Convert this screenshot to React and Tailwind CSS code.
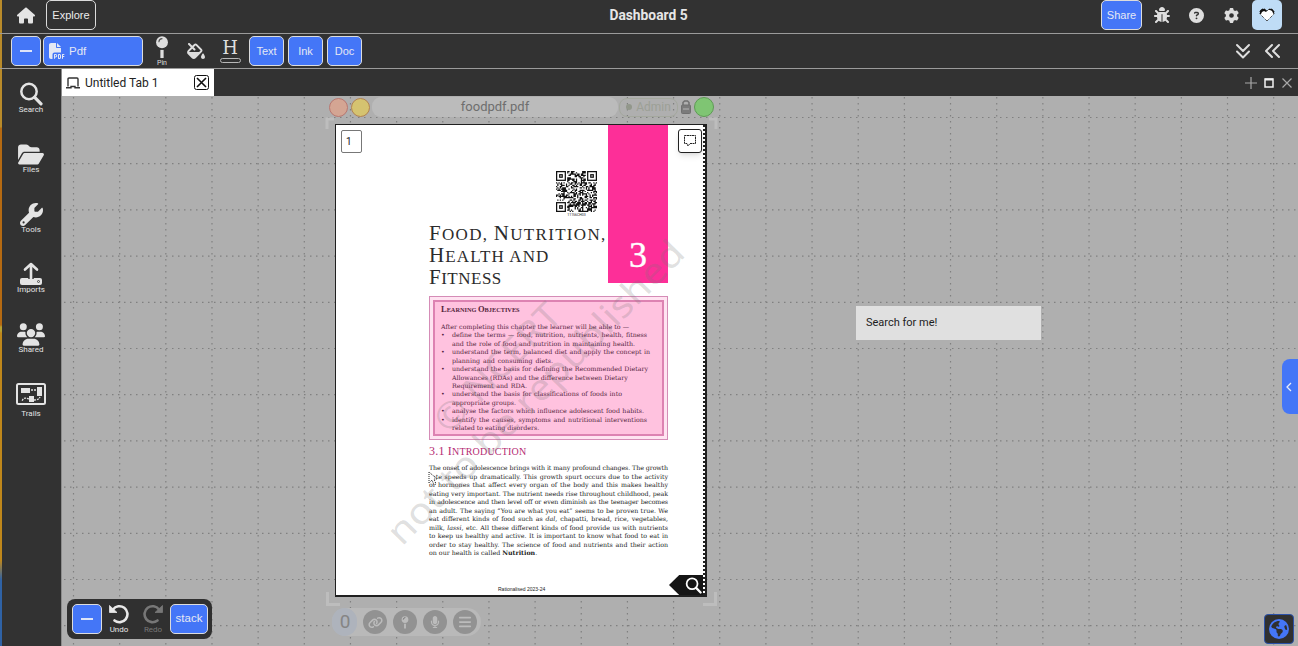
import React from "react";
import {
  FaHouse, FaBug, FaCircleQuestion, FaGear, FaFillDrip, FaFolderOpen,
  FaWrench, FaUsers, FaLink, FaMicrophone, FaBars,
  FaFilePdf, FaEarthAmericas,
} from "react-icons/fa6";

const blueBtn =
  "flex h-[30px] items-center justify-center rounded-[5px] border border-[#dcdcdc] bg-[#4476f7] font-['Liberation_Sans',sans-serif] text-[12px] text-[#e4e8f4]";

function MagnifierIcon({ className }) {
  return (
    <svg viewBox="0 0 24 24" className={className} fill="none" stroke="currentColor">
      <circle cx="10" cy="9.5" r="7.7" strokeWidth="2.5" />
      <path d="M15.7 15.4 22 21.8" strokeWidth="3.2" strokeLinecap="round" />
    </svg>
  );
}

function ImportIcon() {
  return (
    <svg viewBox="0 0 24 24" className="size-6" fill="none" stroke="currentColor">
      <rect x="1" y="16" width="22" height="7" rx="2" fill="currentColor" stroke="none" />
      <path d="M12 17V3" strokeWidth="5.5" stroke="#323232" />
      <path d="M12 18V3M6 7.5 12 2l6 5.500" strokeWidth="2.6" strokeLinecap="round" strokeLinejoin="round" />
      <circle cx="19.500" cy="19.500" r="1" stroke="#323232" strokeWidth=".8" />
    </svg>
  );
}

function TrailsIcon() {
  return (
    <svg viewBox="0 0 30 22" className="h-[22px] w-[30px]" fill="none" stroke="currentColor">
      <rect x="1" y="1" width="28" height="20" rx="1.500" strokeWidth="2" />
      <path d="M5 5h9v5H5zM21 4h5v9h-5zM13 13h5v6h-5z" fill="currentColor" stroke="none" />
      <path d="M15 7h5M13 16c-5-2-6 0-7 2M18 17c4 0 5-1 6-3" strokeWidth="1.300" strokeDasharray="2 1" />
    </svg>
  );
}

function PinGlyph({ className }) {
  return (
    <svg viewBox="0 0 14 24" className={className}>
      <circle cx="7" cy="6.500" r="6.200" fill="currentColor" />
      <path d="M3.800 6A3.500 3.500 0 0 1 7 2.800" stroke="#555" fill="none" strokeWidth="1.200" strokeLinecap="round" />
      <path d="M5.300 14.500h3.400V23H5.300z" fill="currentColor" />
    </svg>
  );
}

function TurnArrow({ className }) {
  return (
    <svg viewBox="0 0 20 20" className={className} fill="none" stroke="currentColor">
      <path d="M4 5.500A8 8 0 1 1 5.500 16.500" strokeWidth="2.600" strokeLinecap="round" />
      <path d="M.5 1.500V8.500H8z" fill="currentColor" strokeWidth=".8" strokeLinejoin="round" />
    </svg>
  );
}

const sideItems = [
  ["Search", <MagnifierIcon className="size-6" />],
  ["Files", <FaFolderOpen className="h-[23px] w-[26px]" />],
  ["Tools", <FaWrench className="size-[23px]" />],
  ["Imports", <ImportIcon />],
  ["Shared", <FaUsers className="h-[25px] w-[28px]" />],
  ["Trails", <TrailsIcon />],
];

function TopBar() {
  return (
    <header className="flex h-[34px] shrink-0 items-start border-b border-[#9b9b9b] pr-4 pl-[17px]">
      <div className="flex h-[30px] flex-1 items-center">
        <FaHouse className="h-[17px] w-[18px] text-[#e4e4e4]" />
        <div className="ml-[11px] flex h-[30px] w-[50px] items-center justify-center rounded-[5px] border border-[#dcdcdc] font-['Liberation_Sans',sans-serif] text-[11px] text-[#ececec]">
          Explore
        </div>
      </div>
      <h1 className="mr-[2px] flex h-[30px] items-center text-[13.800px] font-bold text-[#e6e6e6]">Dashboard 5</h1>
      <div className="flex h-[30px] flex-1 items-center justify-end text-[#dedede]">
        <div className={`${blueBtn} w-[41px]`}>
          <span className="pt-px text-[11px]">Share</span>
        </div>
        <FaBug className="ml-3 size-4" />
        <FaCircleQuestion className="ml-[19px] size-[15px]" />
        <FaGear className="ml-5 size-[15px]" />
        <div className="ml-[13px] flex h-[30px] w-[30px] items-center justify-center rounded-[5px] bg-[#bfdcf6]">
          <svg viewBox="0 0 16 14" className="h-[14px] w-4">
            <path d="M8 13 1 6V3l2-2h3l2 2 2-2h3l2 2v3z" fill="#fff" stroke="#1b1b1b" strokeDasharray="1 1" />
            <path d="M1 6V2.500L3 1h3l2 2-1 1-2-1-2 1-1 2zM9 2l1-1h3l2 2v3l-1-1-1-2-2-1z" fill="#111" />
          </svg>
        </div>
      </div>
    </header>
  );
}

function Toolbar() {
  return (
    <div className="flex h-[35px] shrink-0 items-center border-b border-[#9b9b9b] pr-[17px] pl-[11px] text-[#dedede]">
      <div className={`${blueBtn} w-[30px]`}>
        <span className="h-[2px] w-3 bg-[#dde4f8]" />
      </div>
      <div className={`${blueBtn} ml-[2px] w-[100px] !justify-start pl-[5px]`}>
        <FaFilePdf className="size-4" />
        <span className="ml-[4px] pt-px text-[11.500px]">Pdf</span>
      </div>
      <div className="ml-[9px] flex w-5 flex-col items-center">
        <PinGlyph className="h-[23px] w-[14px]" />
        <span className="text-[7px] leading-[8px]">Pin</span>
      </div>
      <FaFillDrip className="ml-[15px] h-[16px] w-[18px]" />
      <div className="ml-[14px] flex w-[22px] flex-col items-center">
        <span className="font-['DejaVu_Serif',serif] text-[18px] leading-[16px]">H</span>
        <span className="mt-[2px] h-[5px] w-[21px] rounded-full border border-[#b8b8b8]" />
      </div>
      <div className={`${blueBtn} ml-2 w-[35px]`}>
        <span className="text-[11px]">Text</span>
      </div>
      <div className={`${blueBtn} ml-1 w-[35px]`}>
        <span className="text-[11px]">Ink</span>
      </div>
      <div className={`${blueBtn} ml-1 w-[35px]`}>
        <span className="text-[11px]">Doc</span>
      </div>
      <div className="ml-auto flex items-center gap-[14px]">
        <svg viewBox="0 0 16 16" className="size-4" fill="none" stroke="currentColor" strokeWidth="2" strokeLinecap="round" strokeLinejoin="round">
          <path d="m2 2 6 6 6-6M2 8.500l6 6 6-6" />
        </svg>
        <svg viewBox="0 0 16 16" className="size-4" fill="none" stroke="currentColor" strokeWidth="2" strokeLinecap="round" strokeLinejoin="round">
          <path d="M7 2 1 8l6 6M14 2 8 8l6 6" />
        </svg>
      </div>
    </div>
  );
}

function Sidebar() {
  return (
    <nav className="flex w-[62px] shrink-0 flex-col items-center border-r border-[#8c8c8c] pt-[13px] pl-px text-[#e4e4e4]">
      {sideItems.map(([label, icon]) => (
        <div key={label} className="flex h-[60px] flex-col items-center">
          <span className="flex h-6 items-center">{icon}</span>
          <span className={label === "Trails" ? "mt-[3px] text-[8px] leading-[10px]" : "mt-[-1px] text-[8px] leading-[10px]"}>{label}</span>
        </div>
      ))}
    </nav>
  );
}

function TabStrip() {
  return (
    <div className="flex h-[27px] shrink-0 items-center pr-[5px]">
      <div className="flex h-full w-[152px] items-center bg-white pr-[5px] pl-1 text-[#222]">
        <svg viewBox="0 0 14 12" className="h-3 w-[14px]" fill="none" stroke="#333" strokeWidth="1.400">
          <path d="M2 9.500V2q0-1 1-1h8q1 0 1 1v7.500" />
          <path d="M0 10.800h5V9.500h4v1.300h5" />
        </svg>
        <span className="ml-[5px] text-[12px]">Untitled Tab 1</span>
        <svg viewBox="0 0 15 15" className="ml-auto size-[15px]" fill="none" stroke="#111">
          <rect x=".5" y=".5" width="14" height="14" rx="2" />
          <path d="m3 3 9 9m0-9-9 9" strokeWidth="1.600" />
        </svg>
      </div>
      <svg viewBox="0 0 49 14" className="ml-auto h-[14px] w-[49px]" fill="none" stroke="#a8a8a8">
        <path d="M1 7h12M7 1v12" strokeWidth="1.200" />
        <path d="M21 3h8v8h-8z" stroke="#f2f2f2" strokeWidth="1.500" />
        <path d="M21 3.500h8" stroke="#f2f2f2" strokeWidth="2" />
        <path d="m38.500 2.500 9 9m0-9-9 9" strokeWidth="1.200" />
      </svg>
    </div>
  );
}

function CanvasGrid() {
  const xs = Array.from({ length: 27 }, (_, i) => 11.5 + i * 46.16);
  const ys = Array.from({ length: 12 }, (_, i) => 21.5 + i * 46.2);
  return (
    <svg className="absolute inset-0 h-full w-full" stroke="#808080" strokeWidth="1.200" strokeDasharray="1.500 4.500">
      {xs.map((x) => <line key={x} x1={x} x2={x} y1="1" y2="550" />)}
      {ys.map((y) => <line key={y} x1="2" x2="1236" y1={y} y2={y} />)}
    </svg>
  );
}

function QrCode() {
  const n = 33;
  const cells = [];
  let seed = 77;
  for (let y = 0; y < n; y++) {
    for (let x = 0; x < n; x++) {
      seed = (seed * 1103515245 + 12345) % 2147483648;
      const inFinder = (x < 9 && y < 9) || (x > 23 && y < 9) || (x < 9 && y > 23);
      if (!inFinder && seed / 2147483648 > 0.48) cells.push(`M${x} ${y}h1v1h-1z`);
    }
  }
  return (
    <svg viewBox="0 0 33 33" className="size-[41px]">
      <path d={cells.join("")} fill="#111" />
      {[[0, 0], [25, 0], [0, 25]].map(([x, y]) => (
        <g key={`${x}-${y}`} fill="none" stroke="#111">
          <rect x={x + 0.5} y={y + 0.5} width="7" height="7" />
          <rect x={x + 3} y={y + 3} width="2" height="2" />
        </g>
      ))}
    </svg>
  );
}

const objectives = [
  [false, "After completing this chapter the learner will be able to —", 188],
  [true, "define the terms — food, nutrition, nutrients, health, fitness", 195],
  [false, "and the role of food and nutrition in maintaining health.", 183],
  [true, "understand the term, balanced diet and apply the concept in", 198],
  [false, "planning and consuming diets.", 101],
  [true, "understand the basis for defining the Recommended Dietary", 196],
  [false, "Allowances (RDAs) and the difference between Dietary", 175],
  [false, "Requirement and RDA.", 75],
  [true, "understand the basis for classifications of foods into", 170],
  [false, "appropriate groups.", 64],
  [true, "analyse the factors which influence adolescent food habits.", 192],
  [true, "identify the causes, symptoms and nutritional interventions", 195],
  [false, "related to eating disorders.", 87],
];

const tight = "h-[8.500px] whitespace-nowrap tracking-[-0.100px] [text-align-last:justify]";
const regular = "h-[8.500px] whitespace-nowrap [text-align-last:justify]";

const bodyLines = [
  [tight, "The onset of adolescence brings with it many profound changes. The growth"],
  [regular, "rate speeds up dramatically. This growth spurt occurs due to the activity"],
  [regular, "of hormones that affect every organ of the body and this makes healthy"],
  [regular, "eating very important. The nutrient needs rise throughout childhood, peak"],
  [tight, "in adolescence and then level off or even diminish as the teenager becomes"],
  [regular, "an adult. The saying “You are what you eat” seems to be proven true. We"],
  [regular, <>eat different kinds of food such as <i>dal</i>, chapatti, bread, rice, vegetables,</>],
  [regular, <>milk, <i>lassi</i>, etc. All these different kinds of food provide us with nutrients</>],
  [regular, "to keep us healthy and active. It is important to know what food to eat in"],
  [regular, "order to stay healthy. The science of food and nutrients and their action"],
];

const serifSmall = "font-['DejaVu_Serif',serif] text-[6.300px]";

function PdfPage() {
  return (
    <div className="absolute top-[28px] left-[273px] flex h-[473px] w-[372px] border-2 border-t-[1px] border-l-[1px] border-[#202020] bg-white pl-px text-[#222]">
      <div className="flex w-[331px] flex-col">
        <div className="flex h-[171px]">
          <div className="w-[92px] pt-[5px] pl-[4px]">
            <div className="flex h-[23px] w-[21px] items-center rounded-[2px] border border-[#777] pl-1 text-[10px]">1</div>
          </div>
          <div className="flex w-[179px] flex-col pt-[46px]">
            <div className="mr-[11px] flex flex-col items-center self-end">
              <QrCode />
              <span className="h-[10px] text-[3.500px] leading-[6px]">11156CH03</span>
            </div>
            <h2 className="font-['Liberation_Serif',serif] text-[17px] leading-[22px] whitespace-nowrap text-[#2b2b2b]">
              <div className="h-[22px] tracking-[1.300px]"><span className="text-[21px]">F</span>OOD, <span className="text-[21px]">N</span>UTRITION,</div>
              <div className="h-[22px] tracking-[1.100px]"><span className="text-[21px]">H</span>EALTH AND</div>
              <div className="h-[22px] tracking-[0.500px]"><span className="text-[21px]">F</span>ITNESS</div>
            </h2>
          </div>
          <div className="flex h-[158px] w-[60px] items-end justify-center bg-[#fd2f98] pb-[10px] font-['Liberation_Serif',serif] text-[36px] leading-[36px] text-white [-webkit-text-stroke:0.400px_white]">3</div>
        </div>
        <section className="ml-[92px] h-[144px] border border-[#d58cb7] bg-[#ffe3f1] p-[3px]">
          <div className={`${serifSmall} h-full border-2 border-[#dd82b2] bg-[#ffc2df] pl-[6px] leading-[8.430px] text-[#54253d]`}>
            <h3 className="mt-[2px] mb-[8px] font-['Liberation_Serif',serif] text-[6.300px] leading-[11px] font-bold">
              <span className="text-[8.500px]">L</span>EARNING <span className="text-[8.500px]">O</span>BJECTIVES
            </h3>
            {objectives.map(([bullet, text, width], i) => (
              <div key={i} className="flex h-[8.430px]">
                {i > 0 && <span className="w-[11px]">{bullet ? "•" : ""}</span>}
                <span className="whitespace-nowrap [text-align-last:justify]" style={{ width }}>{text}</span>
              </div>
            ))}
          </div>
        </section>
        <h3 className="mt-[4px] ml-[92px] h-[20px] font-['Liberation_Serif',serif] text-[10px] leading-[14px] tracking-[0.200px] text-[#b52a72]">
          <span className="text-[12px]">3.1 I</span>NTRODUCTION
        </h3>
        <div className={`${serifSmall} ml-[92px] leading-[8.500px]`}>
          {bodyLines.map(([style, line], i) => (
            <div key={i} className={style}>{line}</div>
          ))}
          <div>on our health is called <b>Nutrition</b>.</div>
        </div>
        <div className="mt-auto mb-[2px] ml-[161px] font-['Liberation_Sans',sans-serif] text-[5px] leading-[8px]">Rationalised 2023-24</div>
      </div>
      <div className="flex flex-1 flex-col items-end justify-between border-r-2 border-dotted border-[#222]">
        <div className="mt-[4px] mr-px flex size-6 items-center justify-center rounded-[3px] border border-[#222] bg-white shadow-md">
          <svg viewBox="0 0 12 12" className="size-3" fill="none" stroke="#222" strokeDasharray="2 .5">
            <path d="M.5.5h11v8H6l-2 2.500-1-2.500H.5z" />
          </svg>
        </div>
        <div className="flex h-5 w-[34px] items-center justify-end bg-[#151515] pr-px text-white [clip-path:polygon(0_50%,30%_0,100%_0,100%_100%,30%_100%)]">
          <MagnifierIcon className="size-[17px]" />
        </div>
      </div>
      <svg className="pointer-events-none absolute inset-0 h-full w-full" fill="#777" fillOpacity=".24" fontFamily="Noto Sans, sans-serif" fontSize="36">
        <text transform="translate(66 422) rotate(-45.700)" textLength="408" lengthAdjust="spacingAndGlyphs">not to be republished</text>
        <text transform="translate(113 310) rotate(-45.700)" textLength="164" lengthAdjust="spacingAndGlyphs">© NCERT</text>
      </svg>
      <svg viewBox="0 0 10 15" className="absolute top-[346px] left-[92px] h-[15px] w-[10px]" fill="#fff" stroke="#222" strokeDasharray="1 1">
        <path d="M1 1v11l3-3 2 5 2-1-2-5h3z" />
      </svg>
    </div>
  );
}

function PdfHeader() {
  return (
    <div className="absolute top-0 left-[267px] flex h-[22px] w-[385px] items-center">
      <span className="size-[19px] rounded-full border border-[#b97770] bg-[#d4a593]" />
      <span className="ml-[3px] size-[19px] rounded-full border border-[#b28350] bg-[#d5c370]" />
      <span className="ml-[2px] flex h-5 w-[246px] items-center justify-center rounded-[9px] bg-[#bbb] pb-px text-[13px] text-[#6e6e6e]">foodpdf.pdf</span>
      <span className="ml-[1px] flex h-[19px] w-[59px] items-center justify-center gap-1 rounded-[8px] border border-[#a4a89e] text-[12px] text-[#9ca096]">
        <span className="size-[6px] rounded-full bg-[#92978b]" />Admin
      </span>
      <svg viewBox="0 0 10 14" className="ml-[3px] h-[14px] w-[10px]" fill="none" stroke="#707070">
        <path d="M2 6V2.500L3.500 1h3L8 2.500V6" strokeWidth="1.500" />
        <rect x=".500" y="5" width="9" height="8.500" rx="1" fill="#7b7b7b" />
        <path d="M2 9h6" stroke="#b5b5b5" />
      </svg>
      <span className="ml-auto size-5 rounded-full border border-[#5e9b55] bg-[#7fc573]" />
    </div>
  );
}

function LinkBar() {
  const circle = "flex size-6 items-center justify-center rounded-full bg-[#929292]";
  return (
    <div className="absolute top-[512px] left-[270px] flex h-7 w-[149px] items-center gap-[6px] rounded-full bg-[#b9b9b9] pr-[3px] text-[#bcbcbc]">
      <span className="flex h-[28px] w-[25px] items-center justify-center rounded-full bg-[#aeb3bc] pl-px text-[19px] text-[#858585]">0</span>
      <span className={circle}><FaLink className="size-[15px]" /></span>
      <span className={circle}><PinGlyph className="h-[13px] w-2" /></span>
      <span className={circle}><FaMicrophone className="size-3" /></span>
      <span className={circle}><FaBars className="size-[14px]" /></span>
    </div>
  );
}

function CornerMarks() {
  return (
    <svg className="absolute inset-0 h-full w-full" fill="none" stroke="#bdbdbd" strokeWidth="3">
      <path d="M265 33V23h7M654 33V23h-7M265.500 496v12.500H278M653.500 496v12.500H641" />
    </svg>
  );
}

function UndoBar() {
  return (
    <div className="absolute top-[503px] left-[5px] flex h-10 w-[145px] items-center rounded-[8px] bg-[#303030] pr-1 pl-[5px] text-[#e8e8e8]">
      <div className={`${blueBtn} w-[30px]`}><span className="h-[2px] w-3 bg-[#dde4f8]" /></div>
      <div className="ml-[5px] flex w-6 flex-col items-center text-[8px] leading-[10px]">
        <TurnArrow className="mb-px size-5" />Undo
      </div>
      <div className="ml-[10px] flex w-6 flex-col items-center text-[8px] leading-[10px] text-[#777]">
        <TurnArrow className="mb-px size-5 -scale-x-100" />Redo
      </div>
      <div className={`${blueBtn} ml-auto w-[38px]`}>
        <span className="text-[11.500px]">stack</span>
      </div>
    </div>
  );
}

export default function App() {
  return (
    <div className="flex h-[646px] w-full overflow-hidden bg-[#323232] font-[Roboto,sans-serif]">
      <div className="mr-[-2px] w-[2px] shrink-0 bg-[linear-gradient(#b98b2a_0_127px,#b56a12_128px_325px,#b8a030_327px_331px,#bf871b_333px_560px,#2f62a5_580px)]" />
      <div className="flex min-w-0 flex-1 flex-col">
        <TopBar />
        <Toolbar />
        <div className="flex min-h-0 flex-1">
          <Sidebar />
          <div className="flex min-w-0 flex-1 flex-col">
            <TabStrip />
            <main className="relative flex-1 overflow-hidden bg-[#afafaf]">
              <CanvasGrid />
              <CornerMarks />
              <PdfHeader />
              <PdfPage />
              <LinkBar />
              <div className="absolute top-[210px] left-[794px] flex h-[34px] w-[185px] items-center bg-[#e0e0e0] pl-[10px] text-[11px] text-[#1d1d1d]">Search for me!</div>
              <div className="absolute top-[263px] right-0 flex h-[55px] w-4 items-center justify-center rounded-l-[8px] bg-[#4476f7]">
                <svg viewBox="0 0 6 10" className="mr-[2px] h-[10px] w-[6px]" fill="none" stroke="#e8edfb" strokeWidth="1.300"><path d="M5 1 1 5l4 4" /></svg>
              </div>
              <UndoBar />
              <div className="absolute top-[518px] left-[1202px] flex size-[30px] items-center justify-center rounded-[4px] border border-[#2b51a8] bg-[#303030] text-[#4476f7]">
                <FaEarthAmericas className="size-5" />
              </div>
            </main>
          </div>
        </div>
      </div>
    </div>
  );
}
